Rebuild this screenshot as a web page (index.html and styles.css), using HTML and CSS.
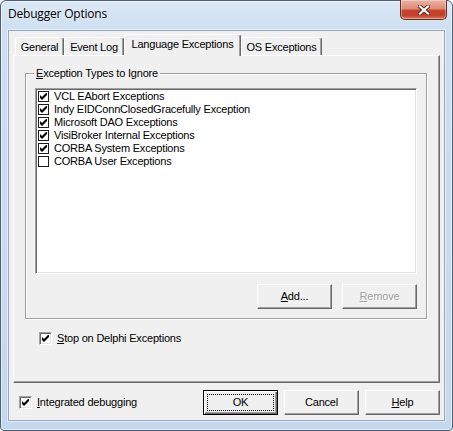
FILE: index.html
```html
<!DOCTYPE html>
<html>
<head>
<meta charset="utf-8">
<title>Debugger Options</title>
<link rel="stylesheet" href="styles.css">
</head>
<body>
<div class="window">
  <div class="titlebar">
    <span class="title">Debugger Options</span>
    <div class="close">
      <svg width="12" height="10" viewBox="0 0 12 10">
        <path d="M2 1.5 L10 8.5 M10 1.5 L2 8.5" stroke="#5b2418" stroke-width="4" stroke-linecap="square"/>
        <path d="M2 1.5 L10 8.5 M10 1.5 L2 8.5" stroke="#fff" stroke-width="2.2" stroke-linecap="square"/>
      </svg>
    </div>
  </div>
  <div class="client">
    <div class="tabs">
      <div class="tab t-gen">General</div>
      <div class="tab t-log">Event Log</div>
      <div class="tab sel t-lang">Language Exceptions</div>
      <div class="tab t-os">OS Exceptions</div>
    </div>
    <div class="page">
      <fieldset class="group">
        <legend><u>E</u>xception Types to Ignore</legend>
        <div class="list">
          <div class="item"><span class="flat"><svg width="7" height="7" viewBox="0 0 7 7"><polygon points="0,2 2,4 6,0 7,0 7,2 2,7 0,5" fill="#000"/></svg></span>VCL EAbort Exceptions</div>
          <div class="item"><span class="flat"><svg width="7" height="7" viewBox="0 0 7 7"><polygon points="0,2 2,4 6,0 7,0 7,2 2,7 0,5" fill="#000"/></svg></span>Indy EIDConnClosedGracefully Exception</div>
          <div class="item"><span class="flat"><svg width="7" height="7" viewBox="0 0 7 7"><polygon points="0,2 2,4 6,0 7,0 7,2 2,7 0,5" fill="#000"/></svg></span>Microsoft DAO Exceptions</div>
          <div class="item"><span class="flat"><svg width="7" height="7" viewBox="0 0 7 7"><polygon points="0,2 2,4 6,0 7,0 7,2 2,7 0,5" fill="#000"/></svg></span>VisiBroker Internal Exceptions</div>
          <div class="item"><span class="flat"><svg width="7" height="7" viewBox="0 0 7 7"><polygon points="0,2 2,4 6,0 7,0 7,2 2,7 0,5" fill="#000"/></svg></span>CORBA System Exceptions</div>
          <div class="item"><span class="flat"></span>CORBA User Exceptions</div>
        </div>
        <div class="btnrow">
          <div class="btn"><u>A</u>dd...</div>
          <div class="btn disabled"><u>R</u>emove</div>
        </div>
      </fieldset>
      <div class="check stop"><span class="box"><svg width="7" height="7" viewBox="0 0 7 7"><polygon points="0,2 2,4 6,0 7,0 7,2 2,7 0,5" fill="#000"/></svg></span><span><u>S</u>top on Delphi Exceptions</span></div>
    </div>
    <div class="bottom">
      <div class="check integ"><span class="box"><svg width="7" height="7" viewBox="0 0 7 7"><polygon points="0,2 2,4 6,0 7,0 7,2 2,7 0,5" fill="#000"/></svg></span><span><u>I</u>ntegrated debugging</span></div>
      <div class="btns">
        <div class="btn default"><span class="focus">OK</span></div>
        <div class="btn">Cancel</div>
        <div class="btn"><u>H</u>elp</div>
      </div>
    </div>
  </div>
</div>
</body>
</html>
```
FILE: styles.css
```css
* { box-sizing: border-box; }
html, body { margin: 0; padding: 0; }
body {
  width: 453px;
  height: 431px;
  overflow: hidden;
  background: #ffffff;
  font-family: "Liberation Sans", Arial, sans-serif;
  font-size: 11px;
  letter-spacing: -0.2px;
  color: #000;
}
u { text-decoration: underline; text-underline-offset: 1px; }

.window {
  width: 453px;
  height: 431px;
  border: 1px solid #4c6079;
  border-radius: 6px 6px 4px 4px;
  background: linear-gradient(180deg, #dae7f5 0px, #cddff1 30px, #c4d8ee 100%);
  box-shadow: inset 0 0 0 1px rgba(255,255,255,0.55);
  padding: 0 7px 9px 7px;
  display: flex;
  flex-direction: column;
}

.titlebar {
  height: 29px;
  display: flex;
  justify-content: space-between;
  align-items: flex-start;
}
.title {
  font-family: "Open Sans", "Liberation Sans", sans-serif;
  font-size: 12px;
  line-height: 16px;
  margin-top: 5px;
  color: #000;
  letter-spacing: -0.2px;
  text-shadow: 0 0 6px rgba(255,255,255,0.9);
}
.close {
  width: 47px;
  height: 20px;
  margin-top: -1px;
  margin-right: -2px;
  border: 1px solid #6e2a1c;
  border-top: none;
  border-radius: 0 0 5px 5px;
  background: linear-gradient(180deg, #eab3a4 0%, #de8b75 45%, #c8442b 55%, #c0402a 80%, #d87a60 100%);
  box-shadow: inset 0 0 0 1px rgba(255,255,255,0.35);
  display: flex;
  align-items: center;
  justify-content: center;
}

.client {
  flex: 1;
  background: #f0f0f0;
  border: 1px solid #95aac2;
  box-shadow: 0 0 0 1px rgba(255,255,255,0.5);
  padding: 3px 4px 4px 4px;
  display: flex;
  flex-direction: column;
}

.tabs {
  height: 21px;
  display: flex;
  align-items: flex-end;
  padding-left: 2px;
  position: relative;
  z-index: 1;
}
.tab {
  height: 18px;
  padding-top: 3px;
  line-height: 13px;
  text-align: center;
  border-top: 1px solid #fff;
  border-left: 1px solid #fff;
  border-right: 1px solid #696969;
  border-radius: 3px 3px 0 0;
  box-shadow: inset -1px 0 0 #a0a0a0;
  background: #f0f0f0;
  white-space: nowrap;
}
.tab.sel {
  height: 22px;
  margin-bottom: -1px;
  padding-top: 3px;
}
.t-gen { width: 49px; }
.t-log { width: 60px; }
.t-lang { width: 117px; }
.t-os { width: 81px; }

.page {
  height: 328px;
  border-top: 1px solid #fff;
  border-left: 1px solid #fff;
  border-right: 1px solid #696969;
  border-bottom: 1px solid #696969;
  box-shadow: inset -1px -1px 0 #a0a0a0;
  padding: 11px 12px 0 11px;
  display: flex;
  flex-direction: column;
}

.group {
  margin: 0;
  width: 402px;
  border: 1px solid #a0a0a0;
  box-shadow: inset 1px 1px 0 #fff, 1px 1px 0 #fff;
  padding: 8px 9px 9px 9px;
  min-width: 0;
}
.group legend {
  padding: 0 2px;
  margin-left: -1px;
  line-height: 13px;
  background: #f0f0f0;
}

.list {
  width: 382px;
  height: 186px;
  background: #fff;
  border: 1px solid;
  border-color: #a0a0a0 #fff #fff #a0a0a0;
  box-shadow: inset 1px 1px 0 #696969, inset -1px -1px 0 #e3e3e3;
  padding: 1px 2px;
}
.item {
  height: 13px;
  line-height: 13px;
  display: flex;
  align-items: center;
  white-space: nowrap;
}
.flat {
  width: 11px;
  height: 11px;
  border: 1px solid #1e1e1e;
  background: #fff;
  margin-right: 5px;
  display: flex;
  align-items: center;
  justify-content: center;
  flex: none;
}

.btnrow {
  margin-top: 10px;
  display: flex;
  justify-content: flex-end;
  gap: 10px;
}
.btn {
  width: 75px;
  height: 25px;
  border: 1px solid;
  border-color: #fff #696969 #696969 #fff;
  box-shadow: inset -1px -1px 0 #a0a0a0;
  background: #f0f0f0;
  display: flex;
  align-items: center;
  justify-content: center;
  line-height: 13px;
  padding: 3px;
}
.btn.disabled {
  color: #a0a0a0;
  text-shadow: 1px 1px 0 #fff;
}
.btn.default {
  border: 1px solid #000;
  box-shadow: inset 1px 1px 0 #fff, inset -1px -1px 0 #696969, inset -2px -2px 0 #a0a0a0;
}
.focus {
  flex: 1;
  align-self: stretch;
  border: 1px dotted #000;
  display: flex;
  align-items: center;
  justify-content: center;
}

.check {
  display: flex;
  align-items: center;
  line-height: 13px;
  white-space: nowrap;
}
.box {
  width: 13px;
  height: 13px;
  border: 1px solid;
  border-color: #a0a0a0 #fff #fff #a0a0a0;
  box-shadow: inset 1px 1px 0 #696969, inset -1px -1px 0 #e3e3e3;
  background: #fff;
  margin-right: 5px;
  display: flex;
  align-items: center;
  justify-content: center;
  flex: none;
}
.stop {
  margin-top: 13px;
  margin-left: 14px;
}

.bottom {
  margin-top: 7px;
  display: flex;
  align-items: center;
  justify-content: space-between;
}
.integ { margin-left: 6px; }
.btns {
  display: flex;
  gap: 6px;
}
```
